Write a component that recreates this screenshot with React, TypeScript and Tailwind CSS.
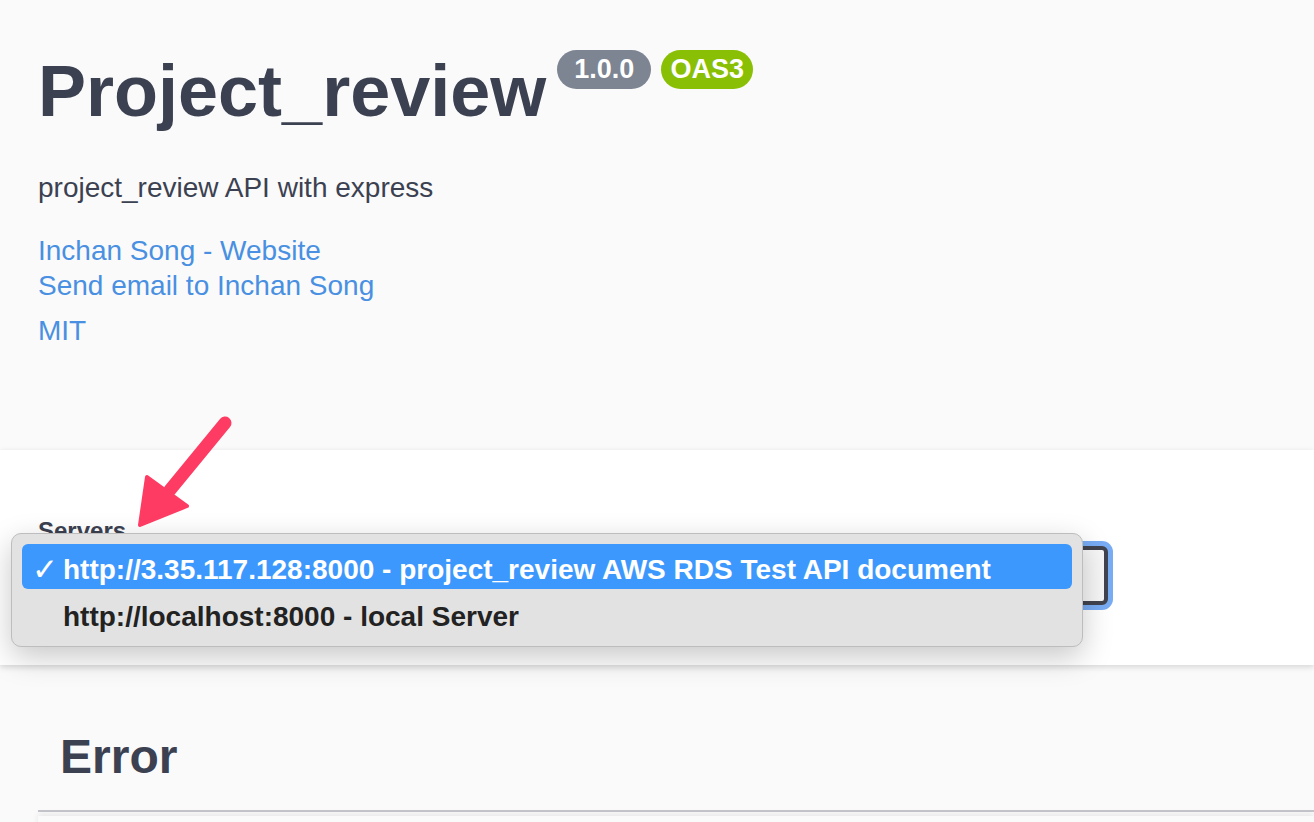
export default function App() {
  const font = { fontFamily: '"Liberation Sans", Arial, sans-serif' };

  return (
    <div className="relative min-h-[822px] overflow-hidden bg-[#fafafa] text-[#3b4151]" style={font}>
      {/* Info block */}
      <div className="h-[450px] pl-[38px] pt-[55px]">
        <div className="flex items-start">
          <h1 className="text-[72px] leading-[72px] font-bold whitespace-nowrap">Project_review</h1>
          <div className="ml-[11px] mt-[-5px] flex gap-[10px]">
            <span className="flex h-[39px] w-[94px] items-center justify-center rounded-full bg-[#7d8492] text-[27px] font-bold text-white">
              1.0.0
            </span>
            <span className="flex h-[39px] w-[92px] items-center justify-center rounded-full bg-[#89bf04] text-[27px] font-bold text-white">
              OAS3
            </span>
          </div>
        </div>
        <p className="mt-[41px] text-[28px] leading-[40px]">project_review API with express</p>
        <div className="mt-[25px] flex flex-col text-[28px] leading-[35px] text-[#4990e2]">
          <a href="#">Inchan Song - Website</a>
          <a href="#">Send email to Inchan Song</a>
          <a href="#" className="mt-[10px]">MIT</a>
        </div>
      </div>

      {/* Servers */}
      <div className="relative z-10 bg-white pl-[38px] pt-[69px] pb-[60px] shadow-[0_2px_6px_rgba(0,0,0,0.15)]">
        <div className="text-[24px] leading-[24px] font-bold">Servers</div>
        <div className="mt-[3px] h-[59px] w-[1070px] rounded-[6px] border-4 border-[#41444e] bg-[#f7f7f7] ring-[5px] ring-[#78acf4]" />
      </div>

      {/* Error tag */}
      <div className="pl-[38px]">
        <h3 className="border-b-2 border-[#c5c6cb] pl-[22px] pt-[68px] pb-[29px] text-[48px] leading-[48px] font-bold">
          Error
        </h3>
        <div className="mt-[4px] h-[40px] bg-[#fafafa] shadow-[0_-2px_6px_rgba(0,0,0,0.08)]" />
      </div>

      {/* Native select popup */}
      <div className="absolute left-[11px] top-[533px] z-20 w-[1072px] rounded-[10px] border border-[#bdbdbd] bg-[#e2e2e2] px-[10px] pt-[10px] pb-[11px] shadow-[0_10px_30px_rgba(0,0,0,0.22)]">
        <div className="flex h-[45px] items-start rounded-[6px] bg-[#3d98fd] text-[28px] leading-[51px] font-bold text-white whitespace-nowrap">
          <span
            className="w-[41px] pl-[10px] text-[31px]"
            style={{ fontFamily: '"DejaVu Sans", sans-serif', fontWeight: 700 }}
          >
            ✓
          </span>
          <span>http://3.35.117.128:8000 - project_review AWS RDS Test API document</span>
        </div>
        <div className="h-[46px] pl-[41px] text-[28px] leading-[55px] font-bold text-[#222222] whitespace-nowrap">
          http://localhost:8000 - local Server
        </div>
      </div>

      {/* Annotation arrow */}
      <svg className="absolute left-0 top-0 z-30" width="1314" height="822" viewBox="0 0 1314 822">
        <line x1="225" y1="423" x2="170" y2="490" stroke="#fe3b63" strokeWidth="13" strokeLinecap="round" />
        <polygon
          points="140,525 147,477 187,506"
          fill="#fe3b63"
          stroke="#fe3b63"
          strokeWidth="4"
          strokeLinejoin="round"
        />
      </svg>
    </div>
  );
}
